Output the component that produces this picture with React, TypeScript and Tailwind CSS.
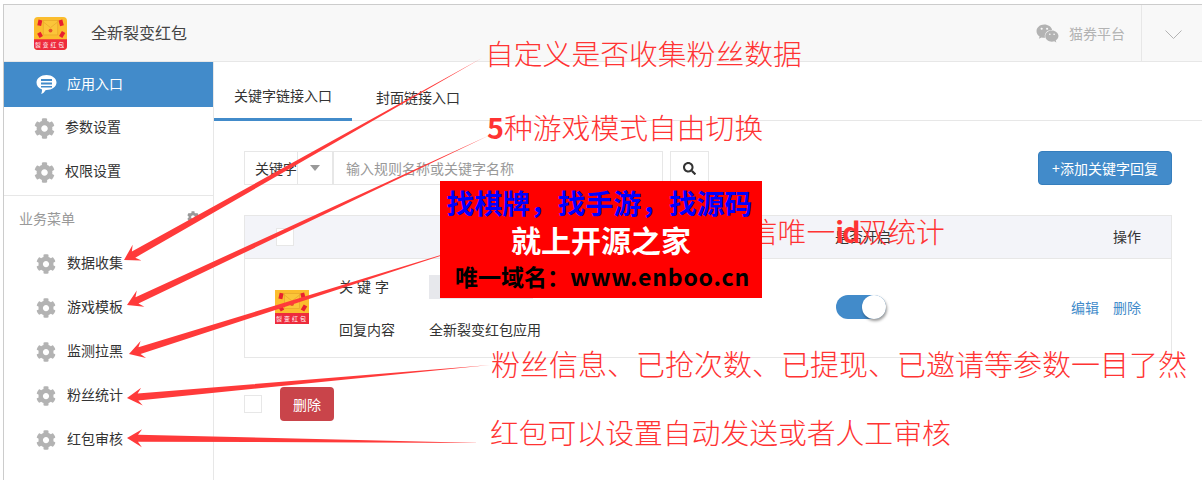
import { FaCog, FaSearch, FaWeixin } from 'react-icons/fa';

const topMenu = [
  { label: '参数设置' },
  { label: '权限设置' },
];

const bizMenu = ['数据收集', '游戏模板', '监测拉黑', '粉丝统计', '红包审核'];

// [tail x, tail y, tip x, tip y]
const arrows = [
  [482, 58, 124, 260],
  [490, 135, 127, 305],
  [480, 243, 129, 354],
  [490, 365, 127, 398],
  [482, 443, 127, 438],
];

function arrowPoints([x1, y1, x2, y2]: number[]): string {
  const len = Math.hypot(x2 - x1, y2 - y1);
  const ux = (x2 - x1) / len;
  const uy = (y2 - y1) / len;
  const nx = -uy;
  const ny = ux;
  const at = (back: number, side: number) =>
    `${x2 - ux * back + nx * side},${y2 - uy * back + ny * side}`;
  return [
    `${x1},${y1}`,
    at(11, 3.5),
    at(15, 9),
    `${x2},${y2}`,
    at(15, -9),
    at(11, -3.5),
  ].join(' ');
}

function Logo({ size, rounded }: { size: number; rounded?: boolean }) {
  return (
    <svg width={size} height={size} viewBox="0 0 34 34" className="shrink-0">
      <rect width="34" height="34" rx={rounded ? 4 : 0} fill="#fbbd2e" />
      <path d={rounded ? 'M0 23h34v7a4 4 0 0 1-4 4H4a4 4 0 0 1-4-4z' : 'M0 23h34v11H0z'} fill="#ee2b3c" />
      <rect x="9.500" y="3.500" width="15" height="15" fill="#fbc53a" stroke="#e9a92c" strokeWidth="0.8" />
      <path d="M9.500 5l7.500 6 7.500-6" fill="none" stroke="#e9a92c" strokeWidth="0.8" />
      <circle cx="17" cy="14" r="2" fill="#e8562a" />
      <rect x="4" y="3" width="4" height="6" fill="#e8202f" transform="rotate(12 6 6)" />
      <rect x="26" y="3" width="4" height="6" fill="#e8202f" transform="rotate(-15 28 6)" />
      <rect x="4" y="16" width="4" height="5" fill="#e8202f" transform="rotate(-30 6 18)" />
      <rect x="27" y="15" width="4" height="6" fill="#e8202f" transform="rotate(30 29 18)" />
      <text x="17" y="31" textAnchor="middle" fontSize="6" fontWeight="400" fill="#fff" letterSpacing="2">
        裂变红包
      </text>
    </svg>
  );
}

function ChatIcon() {
  return (
    <svg width="21" height="20" viewBox="0 0 21 20" className="shrink-0">
      <path d="M10.500 0C16 0 20.500 3.200 20.500 7.500S16 15 10.500 15l-1 .2C8.500 17 7 18.500 5 19c.8-1.200 1.100-2.800 1-4.600C2.500 13.200.5 10.600.5 7.500.5 3.200 5 0 10.500 0z" fill="#fff" />
      <rect x="5" y="4" width="11" height="2" fill="#428bca" />
      <rect x="5" y="7.500" width="11" height="2" fill="#428bca" />
      <rect x="5" y="11" width="11" height="1.500" fill="#428bca" />
    </svg>
  );
}

export default function App() {
  return (
    <div className="relative w-[1202px] h-[480px] overflow-hidden bg-white pt-1 pl-[3px] text-sm text-[#333] font-['Microsoft_YaHei','Noto_Sans_CJK_SC',sans-serif]">
      <div className="flex flex-col h-full border-t border-l border-[#cccccc]">
        {/* 顶栏 */}
        <header className="flex items-center h-[57px] shrink-0 bg-[#f8f8f8] border-b border-[#e7e7e7]">
          <div className="ml-[30px]">
            <Logo size={33} rounded />
          </div>
          <span className="ml-[24px] mb-[2px] text-base text-[#444]">全新裂变红包</span>
          <div className="flex items-center gap-[10px] ml-auto pr-[16px] text-[#b3b3b3]">
            <FaWeixin className="text-[23px]" />
            <span>猫券平台</span>
          </div>
          <div className="flex items-center justify-center w-[61px] h-full border-l border-[#e7e7e7] pl-[3px] pt-[4px]">
            <svg width="17" height="10" viewBox="0 0 17 10">
              <path d="M.5.5l8 8 8-8" fill="none" stroke="#b3b3b3" strokeWidth="1" />
            </svg>
          </div>
        </header>

        <div className="flex flex-1 min-h-0">
          {/* 侧边栏 */}
          <aside className="w-[210px] shrink-0 border-r border-[#e7e7e7]">
            <div className="flex items-center gap-[10px] h-[45px] pl-[32px] bg-[#428bca] text-white">
              <ChatIcon />
              <span className="mb-[3px]">应用入口</span>
            </div>
            <div className="border-b border-[#e7e7e7] h-[90px]">
              {topMenu.map(item => (
                <div key={item.label} className="flex items-center gap-[10px] h-[44px] pl-[30px] text-[#333] first:-mt-px">
                  <FaCog className="text-[21px] text-[#b3b3b3]" />
                  <span className="mb-[4px]">{item.label}</span>
                </div>
              ))}
            </div>
            <div className="flex items-center justify-between h-[46px] pl-[15px] pr-[14px] text-[#999]">
              <span className="mb-[3px]">业务菜单</span>
              <FaCog className="text-[12px] text-[#999] -mt-1" />
            </div>
            {bizMenu.map(label => (
              <div key={label} className="flex items-center gap-[11px] h-[44px] pl-[32px]">
                <FaCog className="text-[20px] text-[#b3b3b3]" />
                <span className="mb-[5px]">{label}</span>
              </div>
            ))}
          </aside>

          {/* 主内容 */}
          <main className="flex-1 min-w-0">
            <div className="flex h-[59px] border-b border-[#e7e7e7]">
              <div className="flex items-center justify-center w-[138px] h-[59px] pt-[10px] border-b-[3px] border-[#428bca]">
                关键字链接入口
              </div>
              <div className="flex items-center justify-center w-[132px] h-[59px] pt-[10px]">封面链接入口</div>
            </div>

            <div className="pt-[30px] pl-[30px] pr-[30px]">
              {/* 搜索栏 */}
              <div className="flex items-center h-[34px]">
                <div className="flex items-center h-full w-[54px] pl-[10px] border border-[#e7e7e7]">关键字</div>
                <div className="flex items-center justify-center h-full w-[35px] border-y border-r border-[#e7e7e7]">
                  <span className="w-0 h-0 border-x-[5px] border-x-transparent border-t-[6px] border-t-[#999]" />
                </div>
                <div className="flex items-center h-full w-[330px] pl-[12px] border border-[#e7e7e7] text-[#999]">
                  输入规则名称或关键字名称
                </div>
                <button className="flex items-center justify-center h-full w-[39px] ml-[7px] border border-[#e7e7e7]">
                  <FaSearch className="text-[13px] text-[#333]" />
                </button>
                <button className="h-full w-[134px] ml-auto rounded bg-[#428bca] border border-[#357ebd] text-white">
                  +添加关键字回复
                </button>
              </div>

              {/* 规则表格 */}
              <div className="mt-[30px] border border-[#e7e7e7]">
                <div className="flex items-center h-[43px] bg-[#f3f4f9] border-b border-[#e7e7e7]">
                  <span className="w-[18px] h-[18px] ml-[31px] bg-white border border-[#e7e7e7]" />
                  <span className="ml-[541px] mb-[3px]">是否开启</span>
                  <span className="ml-auto mr-[30px] mb-[3px]">操作</span>
                </div>
                <div className="flex items-center h-[98px]">
                  <div className="ml-[30px] mb-[2px]">
                    <Logo size={34} />
                  </div>
                  <div className="grid grid-cols-[90px_1fr] gap-y-[20px] items-center ml-[30px] w-[224px] mb-[2px]">
                    <span className="tracking-[4px] mb-[3px]">关键字</span>
                    <span className="h-[24px] w-[104px] bg-[#e7e8ec]" />
                    <span>回复内容</span>
                    <span>全新裂变红包应用</span>
                  </div>
                  <div className="relative ml-[273px] mb-[2px] w-[50px] h-[24px] rounded-full bg-[#428bca]">
                    <span className="absolute right-0 top-0 w-[24px] h-[24px] rounded-full bg-white shadow-[1px_2px_3px_rgba(0,0,0,0.4)]" />
                  </div>
                  <div className="flex gap-[14px] ml-auto mr-[30px] mb-[2px] text-[#428bca]">
                    <span>编辑</span>
                    <span>删除</span>
                  </div>
                </div>
              </div>

              <div className="flex items-center gap-[18px] mt-[29px]">
                <span className="w-[18px] h-[18px] border border-[#e7e7e7]" />
                <button className="w-[54px] h-[34px] rounded bg-[#c9444a] text-white">删除</button>
              </div>
            </div>
          </main>
        </div>
      </div>

      {/* 标注文字和箭头 */}
      <svg width="1202" height="480" viewBox="0 0 1202 480" className="absolute left-0 top-0">
        {arrows.map((a, i) => (
          <polygon key={i} points={arrowPoints(a)} fill="#ff3a3a" />
        ))}
      </svg>
      <div className="absolute left-[485px] top-[33px] text-[28.800px] leading-[40px] font-light text-[#ff3333] whitespace-nowrap">自定义是否收集粉丝数据</div>
      <div className="absolute left-[487px] top-[107px] text-[28.800px] leading-[40px] font-light text-[#ff3333] whitespace-nowrap">
        <b className="font-bold">5</b>种游戏模式自由切换
      </div>
      <div className="absolute left-[720px] top-[211px] text-[28.800px] leading-[40px] font-light text-[#ff3333] whitespace-nowrap">
        微信唯一<b className="font-bold tracking-[-2px]">id</b>双统计
      </div>
      <div className="absolute left-[491px] top-[343px] text-[29px] leading-[40px] font-light text-[#ff3333] whitespace-nowrap">粉丝信息、已抢次数、已提现、已邀请等参数一目了然</div>
      <div className="absolute left-[490px] top-[412px] text-[28.800px] leading-[40px] font-light text-[#ff3333] whitespace-nowrap">红包可以设置自动发送或者人工审核</div>

      {/* 广告横幅 */}
      <div className="absolute left-[440px] top-[181px] flex flex-col items-center w-[322px] h-[117px] bg-[#ff0000] font-bold pr-[3px]">
        <div className="h-[43px] leading-[43px] text-[27.800px] text-[#0000ff] whitespace-nowrap">找棋牌，找手游，找源码</div>
        <div className="h-[31px] leading-[31px] text-[30px] text-white whitespace-nowrap pl-[3px]">就上开源之家</div>
        <div className="h-[43px] leading-[43px] text-[23px] text-black whitespace-nowrap pl-[6px]">
          唯一域名：<span className="tracking-[0.8px]">www.enboo.cn</span>
        </div>
      </div>
    </div>
  );
}
